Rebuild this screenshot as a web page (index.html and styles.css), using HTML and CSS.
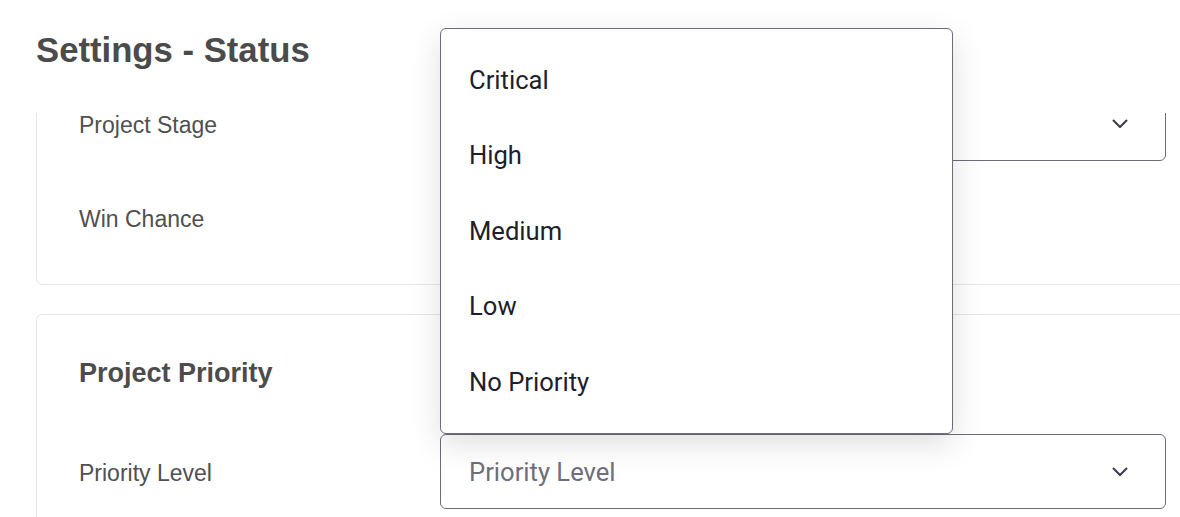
FILE: index.html
```html
<!DOCTYPE html>
<html lang="en">
<head>
<meta charset="utf-8">
<title>Settings - Status</title>
<link rel="stylesheet" href="styles.css">
</head>
<body>
<div class="app">
  <header class="header">
    <h1 class="title">Settings - Status</h1>
  </header>
  <div class="viewport">
    <div class="content">
      <section class="card card-status">
        <div class="row">
          <label class="label">Project Stage</label>
          <div class="select">
            <span class="select-value"></span>
            <svg class="chev" width="16" height="10" viewBox="0 0 16 10"><path d="M1.5 1.5 L8 8 L14.5 1.5" fill="none" stroke="#3c3c48" stroke-width="2" stroke-linecap="round" stroke-linejoin="round"/></svg>
          </div>
        </div>
        <div class="row">
          <label class="label">Win Chance</label>
          <div class="empty"></div>
        </div>
      </section>
      <section class="card card-priority">
        <h2 class="card-title">Project Priority</h2>
        <div class="row">
          <label class="label">Priority Level</label>
          <div class="select">
            <span class="select-placeholder">Priority Level</span>
            <svg class="chev" width="16" height="10" viewBox="0 0 16 10"><path d="M1.5 1.5 L8 8 L14.5 1.5" fill="none" stroke="#3c3c48" stroke-width="2" stroke-linecap="round" stroke-linejoin="round"/></svg>
          </div>
        </div>
      </section>
    </div>
  </div>
  <ul class="menu">
    <li class="option">Critical</li>
    <li class="option">High</li>
    <li class="option">Medium</li>
    <li class="option">Low</li>
    <li class="option">No Priority</li>
  </ul>
</div>
</body>
</html>
```

FILE: styles.css
```css
html, body {
  margin: 0;
  padding: 0;
  background: #ffffff;
}
body {
  width: 1180px;
  height: 517px;
  overflow: hidden;
  font-family: "Liberation Sans", Arial, sans-serif;
}
.app {
  position: relative;
  width: 1180px;
  height: 517px;
  overflow: hidden;
}
.header {
  height: 113px;
  box-sizing: border-box;
  padding: 30px 0 0 36px;
  background: #ffffff;
}
.title {
  margin: 0;
  font-size: 34.7px;
  line-height: 40px;
  font-weight: 700;
  color: #4b4b4b;
}
.viewport {
  height: 404px;
  overflow: hidden;
  padding-left: 36px;
}
.content {
  margin-top: -71px;
  display: flex;
  flex-direction: column;
  gap: 29px;
  width: 1175px;
}
.card {
  border: 1px solid #e6e6e6;
  border-radius: 6px;
  padding: 43px 43px 29px 42px;
  display: flex;
  flex-direction: column;
  gap: 19px;
}
.card-priority {
  padding-top: 42px;
  gap: 45px;
}
.card-title {
  margin: 0;
  font-size: 27px;
  line-height: 32px;
  font-weight: 700;
  color: #4c4c4c;
}
.row {
  display: grid;
  grid-template-columns: 361px 726px;
  align-items: center;
}
.label {
  font-size: 23px;
  line-height: 20px;
  padding-top: 2px;
  color: #505050;
}
.select {
  height: 75px;
  box-sizing: border-box;
  border: 1px solid #6c6c7a;
  border-radius: 6px;
  display: flex;
  align-items: center;
  justify-content: space-between;
  padding: 0 37px 0 28px;
  background: #ffffff;
}
.empty {
  height: 75px;
}
.select-placeholder {
  font-family: Roboto, "Liberation Sans", sans-serif;
  font-size: 25.6px;
  color: #6e6e7c;
}
.chev {
  display: block;
}
.menu {
  position: absolute;
  left: 440px;
  top: 28px;
  width: 513px;
  height: 406px;
  box-sizing: border-box;
  margin: 0;
  padding: 13px 0 0 0;
  list-style: none;
  background: #ffffff;
  border: 1px solid #6c6c7a;
  border-radius: 6px;
  box-shadow: 0 10px 32px rgba(0, 0, 0, 0.13);
  z-index: 2;
}
.option {
  height: 75.5px;
  display: flex;
  align-items: center;
  padding-left: 28px;
  font-family: Roboto, "Liberation Sans", sans-serif;
  font-size: 25.6px;
  color: #1e1e2c;
}
```
